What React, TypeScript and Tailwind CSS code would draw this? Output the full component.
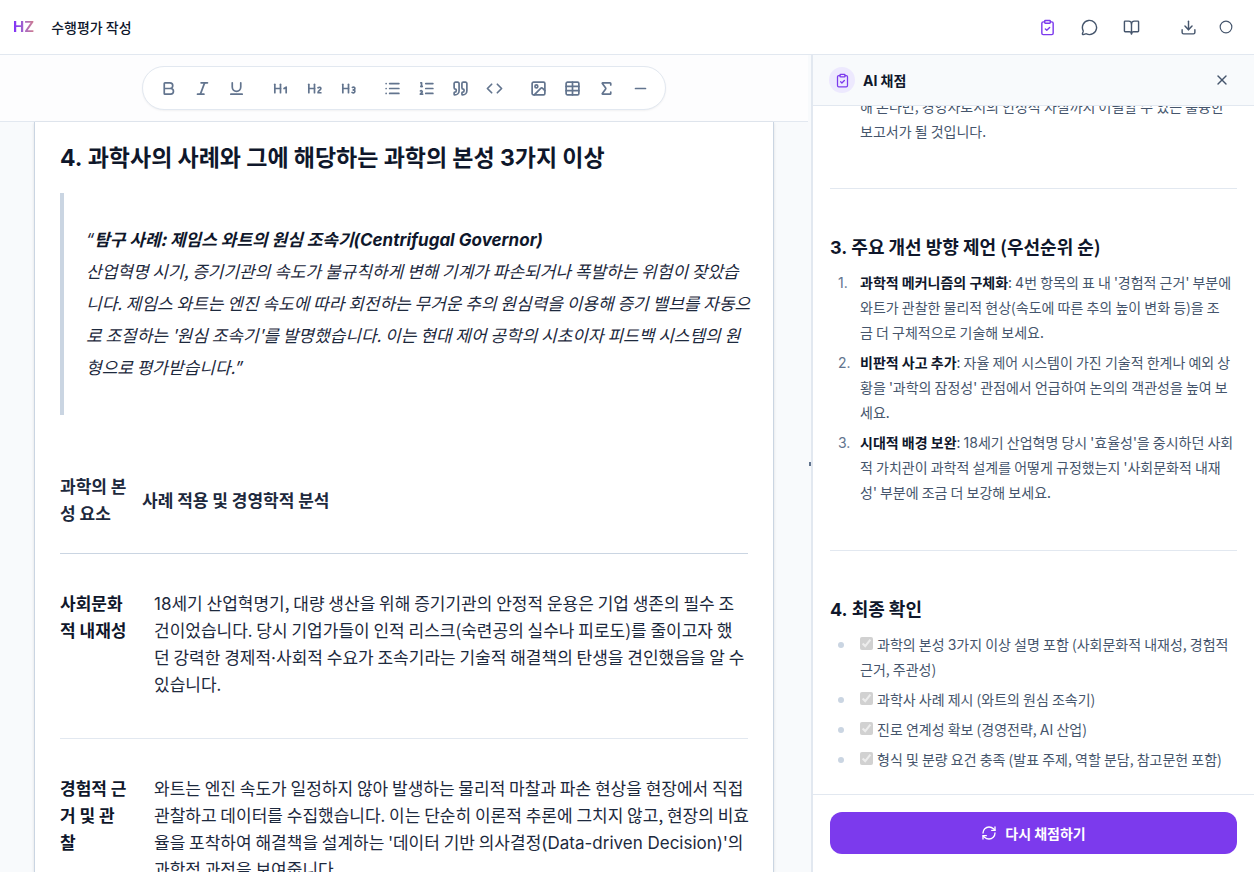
import type { ReactNode } from "react";
import {
  Bold,
  BookOpen,
  Circle,
  ClipboardCheck,
  Code,
  Download,
  Heading1,
  Heading2,
  Heading3,
  Image,
  Italic,
  List,
  ListOrdered,
  MessageCircle,
  Minus,
  Quote,
  RefreshCw,
  Sigma,
  Table,
  Underline,
  X,
} from "lucide-react";
import type { LucideIcon } from "lucide-react";

interface Tool {
  label: string;
  icon: LucideIcon;
}

const toolGroups: Tool[][] = [
  [
    { label: "굵게", icon: Bold },
    { label: "기울임", icon: Italic },
    { label: "밑줄", icon: Underline },
  ],
  [
    { label: "제목 1", icon: Heading1 },
    { label: "제목 2", icon: Heading2 },
    { label: "제목 3", icon: Heading3 },
  ],
  [
    { label: "글머리 기호", icon: List },
    { label: "번호 매기기", icon: ListOrdered },
    { label: "인용", icon: Quote },
    { label: "코드", icon: Code },
  ],
  [
    { label: "이미지", icon: Image },
    { label: "표", icon: Table },
    { label: "수식", icon: Sigma },
    { label: "구분선", icon: Minus },
  ],
];

const suggestions = [
  {
    title: "과학적 메커니즘의 구체화",
    lines: [
      <>
        <En>4</En>번 항목의 표 내 '경험적 근거' 부분에
      </>,
      "와트가 관찰한 물리적 현상(속도에 따른 추의 높이 변화 등)을 조",
      "금 더 구체적으로 기술해 보세요.",
    ],
  },
  {
    title: "비판적 사고 추가",
    lines: [
      "자율 제어 시스템이 가진 기술적 한계나 예외 상",
      "황을 '과학의 잠정성' 관점에서 언급하여 논의의 객관성을 높여 보",
      "세요.",
    ],
  },
  {
    title: "시대적 배경 보완",
    lines: [
      <>
        <En>18</En>세기 산업혁명 당시 '효율성'을 중시하던 사회
      </>,
      "적 가치관이 과학적 설계를 어떻게 규정했는지 '사회문화적 내재",
      "성' 부분에 조금 더 보강해 보세요.",
    ],
  },
];

const checks: ReactNode[][] = [
  [
    <>
      과학의 본성 <En>3</En>가지 이상 설명 포함 (사회문화적 내재성, 경험적
    </>,
    "근거, 주관성)",
  ],
  ["과학사 사례 제시 (와트의 원심 조속기)"],
  [
    <>
      진로 연계성 확보 (경영전략, <En>AI</En> 산업)
    </>,
  ],
  ["형식 및 분량 요건 충족 (발표 주제, 역할 분담, 참고문헌 포함)"],
];

// Latin letters and digits are set in Inter, the rest in the Korean face
function En({ children }: { children: ReactNode }) {
  return <span className="font-['Inter',sans-serif] leading-none">{children}</span>;
}

function Lines({ lines }: { lines: ReactNode[] }) {
  return (
    <>
      {lines.map((line, index) => (
        <span key={index} className="whitespace-nowrap">
          {index > 0 && <br />}
          {line}
        </span>
      ))}
    </>
  );
}

function Header() {
  return (
    <header className="flex h-[55px] shrink-0 items-center justify-between border-b border-slate-200 bg-white px-[13px]">
      <div className="flex items-center gap-[17px]">
        <a
          href="#"
          className="bg-linear-to-r from-violet-600 to-orange-400 to-150% bg-clip-text font-['Inter',sans-serif] text-[15px] font-bold text-transparent"
        >
          HZ
        </a>
        <h1 className="text-sm font-medium text-slate-900">수행평가 작성</h1>
      </div>
      <div className="flex items-center text-slate-600">
        <div className="flex gap-[25px]">
          <button aria-label="AI 채점" className="text-[#7c3aed]">
            <ClipboardCheck size={17} />
          </button>
          <button aria-label="채팅">
            <MessageCircle size={17} />
          </button>
          <button aria-label="자료">
            <BookOpen size={17} />
          </button>
        </div>
        <button aria-label="다운로드" className="ml-10">
          <Download size={17} />
        </button>
        <button aria-label="상태" className="mr-2 ml-[22px]">
          <Circle size={14} strokeWidth={2} />
        </button>
      </div>
    </header>
  );
}

function Toolbar() {
  return (
    <div className="flex shrink-0 justify-center border-b border-slate-200 bg-[#fdfdfe] py-[11px]">
      <div className="flex gap-[10px] rounded-full border border-slate-200 bg-white px-2 py-1 text-slate-500 shadow-xs">
        {toolGroups.map((tools, index) => (
          <div key={index} className="flex">
            {tools.map(({ label, icon: Icon }) => (
              <button key={label} aria-label={label} className="flex h-[34px] w-[34px] items-center justify-center">
                <Icon size={17} strokeWidth={2.4} />
              </button>
            ))}
          </div>
        ))}
      </div>
    </div>
  );
}

function Editor() {
  return (
    <article className="mx-[34px] min-h-0 flex-1 overflow-hidden border-x border-slate-300 bg-white px-[25px] pt-[18px] text-[17px] leading-[27px] text-slate-800 shadow-sm">
      <h2 className="text-[23px] leading-8 font-bold whitespace-nowrap text-slate-900">
        <En>4.</En> 과학사의 사례와 그에 해당하는 과학의 본성 <En>3</En>가지 이상
      </h2>
      <blockquote className="mt-[21px] border-l-4 border-slate-300 pt-[30px] pb-8 pl-[22px] leading-8 italic">
        <p>
          <En>“</En>
          <strong className="text-slate-900">
            탐구 사례: 제임스 와트의 원심 조속기<En>(Centrifugal Governor)</En>
          </strong>
          <br />
          <Lines
            lines={[
              "산업혁명 시기, 증기기관의 속도가 불규칙하게 변해 기계가 파손되거나 폭발하는 위험이 잦았습",
              "니다. 제임스 와트는 엔진 속도에 따라 회전하는 무거운 추의 원심력을 이용해 증기 밸브를 자동으",
              "로 조절하는 '원심 조속기'를 발명했습니다. 이는 현대 제어 공학의 시초이자 피드백 시스템의 원",
              <>
                형으로 평가받습니다.<En>”</En>
              </>,
            ]}
          />
        </p>
      </blockquote>
      <table className="mt-[57px] w-full table-fixed border-collapse text-left">
        <thead>
          <tr className="border-b border-slate-300">
            <th className="w-[82px] pb-[27px] whitespace-nowrap">
              <Lines lines={["과학의 본", "성 요소"]} />
            </th>
            <th className="pb-[27px]">사례 적용 및 경영학적 분석</th>
          </tr>
        </thead>
        <tbody>
          <tr className="border-b border-slate-200">
            <th className="pt-[35px] pb-[41px] align-top text-slate-900">
              <Lines lines={["사회문화", "적 내재성"]} />
            </th>
            <td className="pt-[35px] pb-[41px] pl-3 align-top">
              <Lines
                lines={[
                  <>
                    <En>18</En>세기 산업혁명기, 대량 생산을 위해 증기기관의 안정적 운용은 기업 생존의 필수 조
                  </>,
                  "건이었습니다. 당시 기업가들이 인적 리스크(숙련공의 실수나 피로도)를 줄이고자 했",
                  <>
                    던 강력한 경제적<En>·</En>사회적 수요가 조속기라는 기술적 해결책의 탄생을 견인했음을 알 수
                  </>,
                  "있습니다.",
                ]}
              />
            </td>
          </tr>
          <tr>
            <th className="pt-[35px] align-top text-slate-900">
              <Lines lines={["경험적 근", "거 및 관", "찰"]} />
            </th>
            <td className="pt-[35px] pl-3 align-top">
              <Lines
                lines={[
                  "와트는 엔진 속도가 일정하지 않아 발생하는 물리적 마찰과 파손 현상을 현장에서 직접",
                  "관찰하고 데이터를 수집했습니다. 이는 단순히 이론적 추론에 그치지 않고, 현장의 비효",
                  <>
                    율을 포착하여 해결책을 설계하는 '데이터 기반 의사결정<En>(Data-driven Decision)</En>'의
                  </>,
                  "과학적 과정을 보여줍니다.",
                ]}
              />
            </td>
          </tr>
        </tbody>
      </table>
    </article>
  );
}

function GradingPanel() {
  return (
    <aside className="flex w-[443px] shrink-0 flex-col border-l-2 border-slate-200 bg-white">
      <div className="flex h-[51px] shrink-0 items-center border-b border-slate-200 bg-slate-50 pr-6 pl-4">
        <span className="flex h-[26px] w-[26px] items-center justify-center rounded-full bg-violet-100 text-[#7c3aed]">
          <ClipboardCheck size={15} />
        </span>
        <h2 className="ml-2 text-sm font-bold text-slate-900">
          <En>AI</En> 채점
        </h2>
        <button aria-label="닫기" className="ml-auto text-slate-600">
          <X size={16} />
        </button>
      </div>
      <div className="flex min-h-0 flex-1 flex-col justify-end overflow-hidden px-[17px] pb-[22px] text-sm leading-[25px] text-slate-600">
        <p className="pl-[30px]">
          <Lines lines={["해 온다면, 경영자로서의 인성적 자질까지 어필할 수 있는 훌륭한", "보고서가 될 것입니다."]} />
        </p>
        <hr className="mt-11 border-slate-200" />
        <h3 className="mt-11 text-lg leading-[27px] font-bold text-slate-900">
          <En>3.</En> 주요 개선 방향 제언 (우선순위 순)
        </h3>
        <ol className="mt-[10px] flex flex-col gap-[5px]">
          {suggestions.map(({ title, lines }, index) => (
            <li key={title} className="flex">
              <span className="w-[30px] shrink-0 pl-2 text-slate-500">
                <En>{index + 1}.</En>
              </span>
              <p>
                <strong className="text-slate-900">{title}</strong>: <Lines lines={lines} />
              </p>
            </li>
          ))}
        </ol>
        <hr className="mt-[45px] border-slate-200" />
        <h3 className="mt-11 text-lg leading-[27px] font-bold text-slate-900">
          <En>4.</En> 최종 확인
        </h3>
        <ul className="mt-[10px] flex flex-col gap-[5px]">
          {checks.map((lines, index) => (
            <li key={index} className="flex">
              <span className="flex h-[25px] w-[30px] shrink-0 items-center pl-2">
                <span className="h-[6px] w-[6px] rounded-full bg-slate-300" />
              </span>
              <label>
                <input type="checkbox" checked disabled readOnly className="mr-1 h-[13px] w-[13px]" />
                <Lines lines={lines} />
              </label>
            </li>
          ))}
        </ul>
      </div>
      <div className="shrink-0 border-t border-slate-200 px-[17px] pt-[17px] pb-[18px]">
        <button className="flex h-[42px] w-full items-center justify-center gap-2 rounded-xl bg-[#7c3aed] text-sm font-bold text-white">
          <RefreshCw size={16} />
          다시 채점하기
        </button>
      </div>
    </aside>
  );
}

export default function App() {
  return (
    <div className="flex h-screen flex-col overflow-hidden bg-slate-50 font-['Noto_Sans_CJK_KR',sans-serif]">
      <Header />
      <div className="flex min-h-0 flex-1">
        <main className="flex min-w-0 flex-1 flex-col">
          <Toolbar />
          <Editor />
        </main>
        <div className="flex w-[3px] shrink-0 items-center justify-end">
          <span className="h-1 w-[2px] bg-slate-500" />
        </div>
        <GradingPanel />
      </div>
    </div>
  );
}
